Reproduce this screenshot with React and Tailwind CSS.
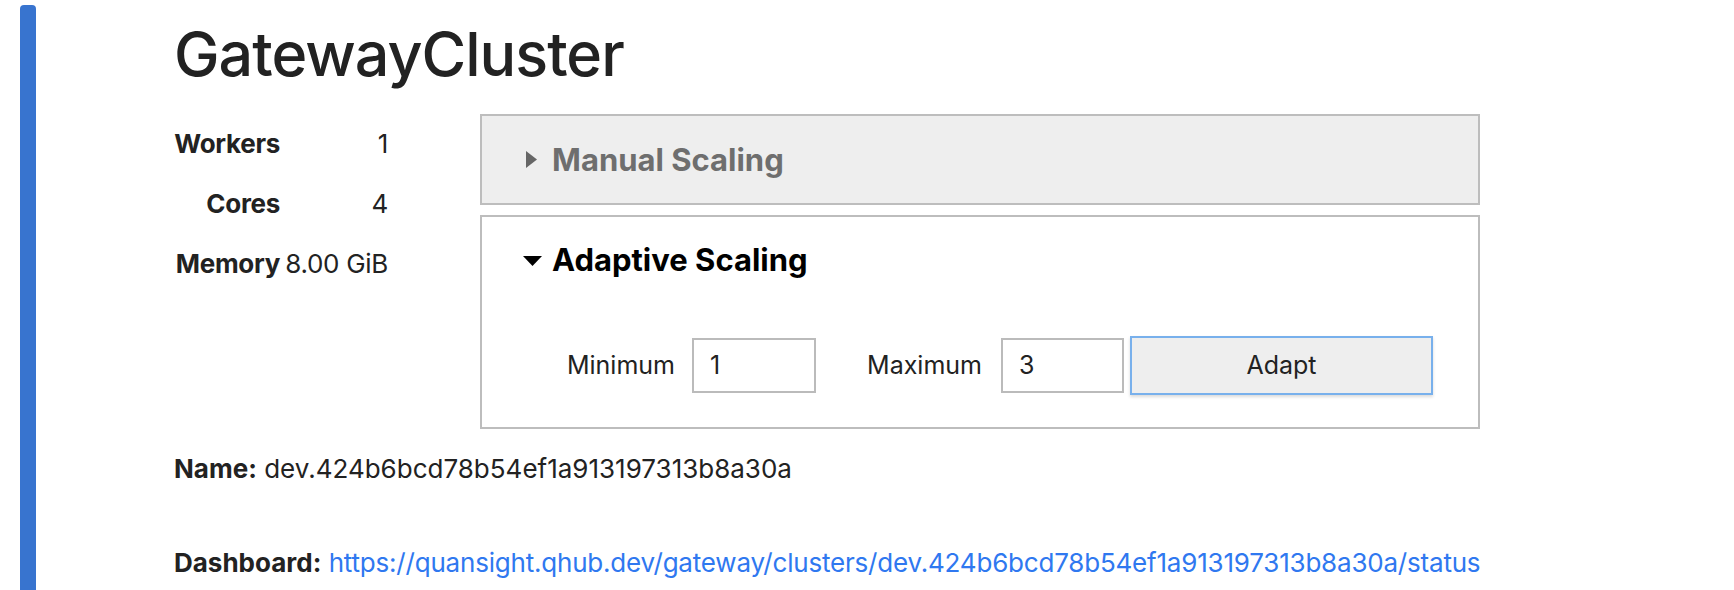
import React from "react";

const font = { fontFamily: "Inter, Roboto, 'Liberation Sans', sans-serif" };

function Row({ label, value }) {
  return (
    <div className="flex h-[60px] items-center whitespace-nowrap">
      <div className="w-[106px] text-right font-bold">{label}</div>
      <div className="ml-[5px] flex-1 text-right">{value}</div>
    </div>
  );
}

export default function App() {
  return (
    <div className="flex min-h-screen bg-white text-[#222]" style={font}>
      <div className="ml-[20px] mt-[5px] w-[16px] shrink-0 rounded-t-[4px] bg-[#3874cf]" />
      <div className="flex flex-col pl-[138px]">
        <h1 className="mt-[22px] text-[61px] font-medium leading-[64px] tracking-[-1px] text-[#222]">GatewayCluster</h1>

        <div className="mt-[28px] flex items-start">
          <div className="flex w-[214px] flex-col text-[26px] leading-[32px] tracking-[-0.3px]">
            <Row label="Workers" value="1" />
            <Row label="Cores" value="4" />
            <Row label="Memory" value="8.00 GiB" />
          </div>

          <div className="ml-[92px] flex w-[1000px] flex-col gap-[10px]">
            <div className="flex h-[91px] items-center border-2 border-[#bdbdbd] bg-[#eeeeee] pl-[44px]">
              <svg width="11" height="17" viewBox="0 0 11 17" className="mr-[15px]">
                <path d="M0 0 L11 8.5 L0 17 Z" fill="#666" />
              </svg>
              <span className="text-[31px] font-bold leading-[40px] text-[#6e6e6e]">Manual Scaling</span>
            </div>

            <div className="flex h-[214px] flex-col border-2 border-[#bdbdbd] bg-white pl-[41px] pt-[23px]">
              <div className="flex items-center">
                <svg width="19" height="10" viewBox="0 0 19 10" className="mr-[10px] mt-[1px]">
                  <path d="M0 0 L19 0 L9.5 10 Z" fill="#000" />
                </svg>
                <span className="text-[31px] font-bold leading-[40px] text-black">Adaptive Scaling</span>
              </div>

              <div className="mt-[56px] flex h-[59px] items-center text-[25px] text-[#222]">
                <div className="ml-[17px] w-[135px] text-right">Minimum</div>
                <div className="ml-[17px] flex h-[55px] w-[124px] items-center border-2 border-[#bbbbbb] bg-white pl-[16px]">1</div>
                <div className="w-[166px] text-right">Maximum</div>
                <div className="ml-[19px] flex h-[55px] w-[123px] items-center border-2 border-[#bbbbbb] bg-white pl-[16px]">3</div>
                <div className="ml-[6px] flex h-[59px] w-[303px] items-center justify-center border-2 border-[#78b0ec] bg-[#eeeeee] shadow-[0_2px_3px_rgba(0,0,0,0.15)]">
                  Adapt
                </div>
              </div>
            </div>
          </div>
        </div>

        <div className="mt-[25px] whitespace-nowrap text-[26px] leading-[30px]">
          <span className="font-bold">Name:</span> dev.424b6bcd78b54ef1a913197313b8a30a
        </div>

        <div className="mt-[64px] whitespace-nowrap text-[26px] leading-[30px]">
          <span className="font-bold">Dashboard:</span>{" "}
          <a className="tracking-[-0.2px] text-[#2f78f0]" href="#">
            https://quansight.qhub.dev/gateway/clusters/dev.424b6bcd78b54ef1a913197313b8a30a/status
          </a>
        </div>
      </div>
    </div>
  );
}
